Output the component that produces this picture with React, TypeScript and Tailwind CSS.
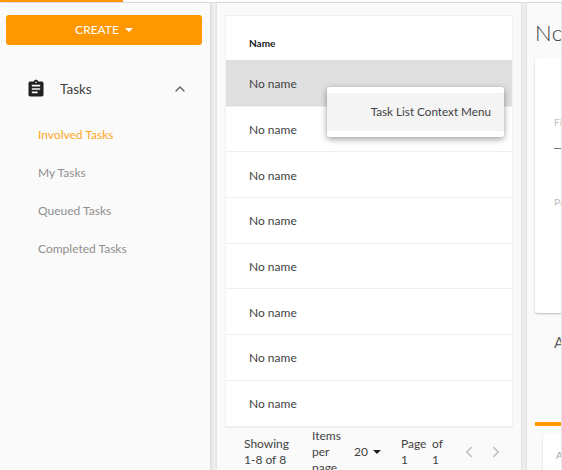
import { ChevronLeft, ChevronRight, ChevronUp } from 'lucide-react';

const subItems = ['My Tasks', 'Queued Tasks', 'Completed Tasks'];
const rows = Array.from({ length: 8 }, (_, i) => i);

function ClipboardIcon() {
  return (
    <svg viewBox="0 0 24 24" className="h-[20px] w-[20px]" fill="#212121">
      <path d="M19 3h-4.18C14.4 1.84 13.3 1 12 1s-2.4.84-2.82 2H5c-1.1 0-2 .9-2 2v14c0 1.1.9 2 2 2h14c1.1 0 2-.9 2-2V5c0-1.1-.9-2-2-2zm-7 0c.55 0 1 .45 1 1s-.45 1-1 1-1-.45-1-1 .45-1 1-1zm2 14H7v-2h7v2zm3-4H7v-2h10v2zm0-4H7V7h10v2z" />
    </svg>
  );
}

function Caret({ color }: { color: string }) {
  return (
    <svg viewBox="0 0 8 4" className="h-[4px] w-[8px]" fill={color}>
      <path d="M0 0h8L4 4z" />
    </svg>
  );
}

export default function App() {
  return (
    <div className="flex h-[470px] w-[562px] flex-col overflow-hidden bg-[#efefef] font-['Lato','Noto_Sans',sans-serif] text-[#424242]">
      <div className="h-[3px] shrink-0 border-b border-[#e4e4e4] bg-white">
        <div className="h-[2px] w-[123px] bg-[#ff9800]" />
      </div>

      <div className="flex min-h-0 flex-1">
        <aside className="w-[210px] shrink-0 bg-[#fafafa] pl-[6px] pr-[8px] pt-[12px] shadow-[1px_0_3px_rgba(0,0,0,0.12)]">
          <button className="flex h-[30px] w-[196px] items-center justify-center gap-[6px] rounded-[3px] bg-[#ff9800] text-[12px] text-white">
            CREATE
            <Caret color="#ffffff" />
          </button>
          <div className="mt-[29px] flex h-[30px] items-center pl-[20px] pr-[14px]">
            <ClipboardIcon />
            <span className="ml-[14px] flex-1 text-[13.5px] text-[#424242]">Tasks</span>
            <ChevronUp size={16} strokeWidth={2} className="text-[#616161]" />
          </div>
          <div className="mt-[22px] pl-[32px] text-[12px] text-[#ffa726]">Involved Tasks</div>
          <ul className="mt-[20px] flex flex-col gap-[21px] pl-[32px] text-[12px] leading-[17px] text-[#8f8f8f]">
            {subItems.map((s) => (
              <li key={s}>{s}</li>
            ))}
          </ul>
        </aside>

        <main className="ml-[7px] flex w-[304px] shrink-0 flex-col bg-[#fafafa] px-[8px] pt-[12px] shadow-[0_0_3px_rgba(0,0,0,0.12)]">
          <div className="relative border border-[#f0f0f0] bg-white">
            <div className="flex h-[45px] items-center border-b border-[#dcdcdc] pl-[23px] pt-[10px] text-[10px] font-bold text-[#212121]">
              Name
            </div>
            {rows.map((r) => (
              <div
                key={r}
                className={`flex h-[45.7px] items-center border-b border-[#efefef] pl-[23px] pt-[2px] text-[12px] text-[#424242] ${r === 0 ? 'bg-[#dfdfdf]' : ''}`}
              >
                No name
              </div>
            ))}
            <div className="absolute left-[101px] top-[71px] w-[177px] rounded-[3px] bg-white py-[6px] shadow-[0_2px_6px_rgba(0,0,0,0.4)]">
              <div className="flex h-[38px] items-center justify-end bg-[#f4f4f4] pr-[13px] text-[11.7px] text-[#424242]">
                Task List Context Menu
              </div>
            </div>
          </div>

          <div className="flex flex-1 items-center pb-[8px] pl-[19px] text-[12px] leading-[16px] text-[#424242]">
            <div className="w-[68px]">
              Showing
              <br />
              1-8 of 8
            </div>
            <div className="w-[42px]">Items per page</div>
            <div className="flex w-[47px] items-center gap-[5px]">
              20
              <Caret color="#212121" />
            </div>
            <div className="grid w-[59px] grid-cols-[31px_1fr]">
              <span>Page</span>
              <span>of</span>
              <span>1</span>
              <span>1</span>
            </div>
            <div className="flex items-center gap-[9px] text-[#bdbdbd]">
              <ChevronLeft size={18} />
              <ChevronRight size={18} />
            </div>
          </div>
        </main>

        <section className="ml-[6px] min-w-0 flex-1 overflow-hidden border-r border-[#e6e6e6] bg-[#fafafa] pl-[8px] pt-[12px] shadow-[0_0_3px_rgba(0,0,0,0.12)]">
          <div className="w-[300px]">
            <h2 className="h-[31px] text-[22px] font-light leading-[36px] tracking-[0.5px] text-[#424242]">No name</h2>
            <div className="mt-[12px] h-[255px] rounded-[3px] bg-white pl-[19px] pt-[57px] shadow-[0_1px_2px_rgba(0,0,0,0.25)]">
              <div className="text-[10px] leading-[14px] text-[#bdbdbd]">First</div>
              <div className="mt-[19px] h-px bg-[#757575]" />
              <div className="mt-[46px] text-[10px] leading-[14px] text-[#bdbdbd]">Priority</div>
            </div>
            <div className="mt-[18px] pl-[19px] text-[15px] leading-[22px] text-[#616161]">Activity</div>
            <div className="mt-[69px] h-[4px] bg-[#ff9800]" />
            <div className="ml-[8px] mt-[8px] h-[60px] rounded-[3px] bg-white pl-[13px] pt-[14px] text-[10px] leading-[14px] text-[#9e9e9e] shadow-[0_1px_2px_rgba(0,0,0,0.2)]">
              Assignee
            </div>
          </div>
        </section>
      </div>
    </div>
  );
}
